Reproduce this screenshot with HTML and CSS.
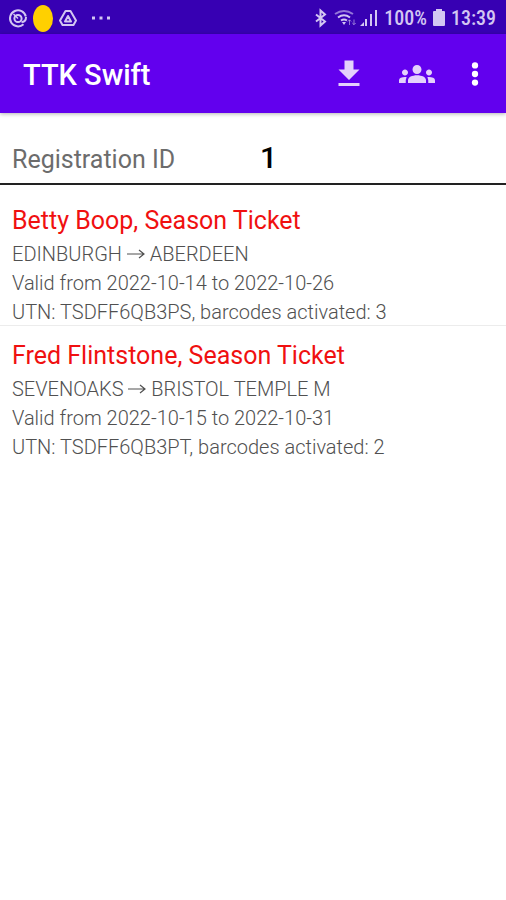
FILE: index.html
```html
<!DOCTYPE html>
<html lang="en">

<head>
    <meta charset="UTF-8">
    <meta name="viewport" content="width=device-width, initial-scale=1.0">
    <title>TTK Swift</title>
    <link rel="stylesheet" href="styles.css">
</head>

<body>
    <div class="status-bar">
        <div class="status-left">
            <svg width="20" height="20" viewBox="0 0 20 20" fill="none" stroke="currentColor" stroke-width="2">
                <path d="M15.500 16.200A8 8 0 1 1 17.800 8.500"/>
                <circle cx="10" cy="10.500" r="3.600"/>
                <path d="M5.500 6l4.500 4.500" stroke-width="1.500"/>
                <path d="M18 9q0 5-4.500 5"/>
            </svg>
            <span class="yellow-dot"></span>
            <svg width="20" height="20" viewBox="0 0 20 20" fill="none" stroke="currentColor" stroke-width="2" stroke-linejoin="round">
                <path d="M7.500 3h5L18 12.500 15.500 17h-11L2 12.500z"/>
                <path d="M10 8l3 5.500H7z"/>
            </svg>
            <svg class="more-dots" width="20" height="20" viewBox="0 0 20 20" fill="currentColor">
                <path d="M1 8.500h3v3H1zM8.500 8.500h3v3h-3zM16 8.500h3v3h-3z"/>
            </svg>
        </div>
        <div class="status-right">
            <svg width="14" height="20" viewBox="0 0 14 20" fill="none" stroke="currentColor" stroke-width="2">
                <path d="M2 6.500l9 7-4.500 4v-15l4.500 4-9 7"/>
            </svg>
            <svg class="wifi" width="24" height="20" viewBox="0 0 24 20" fill="none" stroke="currentColor" stroke-width="2">
                <path d="M1 6q9-6 18 0" opacity=".6"/>
                <path d="M4 9.500q6-4.500 12 0M7 12.500q3-2 6 0"/>
                <path d="M8 14h4l-2 3z" fill="currentColor" stroke="none"/>
                <path d="M15.500 17v-5M13.800 13.500l1.700-1.700 1.700 1.700M20 11.500v5M18.300 15l1.700 1.700 1.700-1.700" stroke-width="1" opacity=".6"/>
            </svg>
            <svg width="18" height="20" viewBox="0 0 18 20" fill="currentColor">
                <path d="M0 18l4-4v4zM5 11h2v7H5zM10 6h2v12h-2zM15 2h2v16h-2z"/>
            </svg>
            <span class="battery-text">100%</span>
            <svg width="12" height="20" viewBox="0 0 12 20" fill="currentColor">
                <path d="M3 1h6v2h2q1 0 1 1v13q0 1-1 1H1q-1 0-1-1V4q0-1 1-1h2z"/>
            </svg>
            <span class="clock">13:39</span>
        </div>
    </div>

    <header class="app-bar">
        <h1>TTK Swift</h1>
        <button type="button" class="btn-icon" aria-label="Download">
            <svg width="36" height="36" viewBox="0 0 24 24" fill="currentColor">
                <path d="M19 9h-4V3H9v6H5l7 7 7-7zM5 18v2h14v-2H5z"/>
            </svg>
        </button>
        <button type="button" class="btn-icon" aria-label="Groups">
            <svg width="36" height="36" viewBox="0 0 24 24" fill="currentColor">
                <path d="M12 12.750c1.630 0 3.070.39 4.240.9 1.080.48 1.760 1.560 1.760 2.730V18H6v-1.610c0-1.180.68-2.260 1.760-2.730 1.170-.52 2.610-.91 4.240-.91zM4 13c1.100 0 2-.9 2-2s-.9-2-2-2-2 .9-2 2 .9 2 2 2zm1.130 1.100c-.37-.06-.74-.1-1.130-.1-.99 0-1.930.21-2.780.58C.48 14.900 0 15.620 0 16.430V18h4.500v-1.610c0-.83.23-1.610.63-2.290zM20 13c1.100 0 2-.9 2-2s-.9-2-2-2-2 .9-2 2 .9 2 2 2zm4 3.430c0-.81-.48-1.530-1.220-1.850-.85-.37-1.790-.58-2.780-.58-.39 0-.76.04-1.130.1.400.68.630 1.460.630 2.290V18H24v-1.570zM12 6c1.660 0 3 1.340 3 3s-1.340 3-3 3-3-1.340-3-3 1.340-3 3-3z"/>
            </svg>
        </button>
        <button type="button" class="btn-icon btn-menu" aria-label="More options">
            <svg width="36" height="36" viewBox="0 0 24 24" fill="currentColor">
                <circle cx="12" cy="6.300" r="2.100"/>
                <circle cx="12" cy="12" r="2.100"/>
                <circle cx="12" cy="17.700" r="2.100"/>
            </svg>
        </button>
    </header>

    <main>
        <form class="registration">
            <label for="registrationId">Registration ID</label>
            <input type="text" id="registrationId" name="registrationId" inputmode="numeric" value="1">
        </form>

        <ul class="tickets">
            <li class="ticket">
                <h2>Betty Boop, Season Ticket</h2>
                <p>EDINBURGH <svg class="arrow" width="18" height="14" viewBox="0 0 18 14" role="img" aria-label="to"><path d="M0 7h17M12 3l5 4-5 4"/></svg> ABERDEEN</p>
                <p>Valid from 2022-10-14 to 2022-10-26</p>
                <p>UTN: TSDFF6QB3PS, barcodes activated: 3</p>
            </li>
            <li class="ticket">
                <h2>Fred Flintstone, Season Ticket</h2>
                <p>SEVENOAKS <svg class="arrow" width="18" height="14" viewBox="0 0 18 14" role="img" aria-label="to"><path d="M0 7h17M12 3l5 4-5 4"/></svg> BRISTOL TEMPLE M</p>
                <p>Valid from 2022-10-15 to 2022-10-31</p>
                <p>UTN: TSDFF6QB3PT, barcodes activated: 2</p>
            </li>
        </ul>
    </main>
</body>

</html>
```
FILE: styles.css
```css
* {
    box-sizing: border-box;
    margin: 0;
    padding: 0;
}

body {
    font-family: Roboto, sans-serif;
    background: #fff;
    color: #505050;
}

svg {
    display: block;
    flex: none;
}

.status-bar {
    height: 34px;
    padding: 0 10px 0 8px;
    display: flex;
    justify-content: space-between;
    align-items: center;
    background: #3700b3;
    color: #d3c6f2;
}

.status-left,
.status-right {
    display: flex;
    align-items: center;
    padding-top: 2px;
}

.status-left {
    gap: 5px;
}

.yellow-dot {
    width: 20px;
    height: 27px;
    border-radius: 50%;
    background: #ffd000;
}

.more-dots {
    margin-left: 8px;
}

.status-right {
    gap: 6px;
    font-family: "Roboto Condensed", Roboto, sans-serif;
    font-size: 20px;
    font-weight: 500;
}

.wifi {
    margin-right: -4px;
}

.app-bar {
    position: relative;
    height: 79px;
    padding: 0 7px 0 23px;
    display: flex;
    align-items: center;
    background: #6200ee;
    color: #fff;
    box-shadow: 0 1px 4px rgba(0, 0, 0, 0.3);
}

.app-bar h1 {
    flex: 1;
    padding-top: 2px;
    font-size: 29px;
    font-weight: 500;
}

.btn-icon {
    width: 68px;
    height: 72px;
    display: flex;
    justify-content: center;
    align-items: center;
    border: none;
    background: none;
    color: #e4d0fc;
    cursor: pointer;
}

.btn-menu {
    width: 48px;
    color: #fff;
}

.registration {
    height: 72px;
    padding: 22px 12px 0;
    display: grid;
    grid-template-columns: 1fr 1fr;
    align-items: center;
    border-bottom: 2px solid #222;
}

.registration label {
    font-size: 25px;
    color: #6c6c6c;
}

.registration input {
    width: 100%;
    padding: 0 0 4px 7px;
    border: none;
    outline: none;
    background: none;
    font-family: inherit;
    font-size: 30px;
    font-weight: 500;
    color: #000;
}

.tickets {
    padding-top: 6px;
    list-style: none;
}

.ticket {
    padding: 13px 12px 0;
    display: flex;
    flex-direction: column;
    gap: 3px;
    border-bottom: 1px solid #ececec;
}

.ticket:last-child {
    border-bottom: none;
}

.ticket h2 {
    font-size: 25px;
    font-weight: 400;
    line-height: 34px;
    color: #f01010;
}

.ticket p {
    font-size: 20px;
    font-weight: 300;
    line-height: 26px;
}

.arrow {
    display: inline-block;
    fill: none;
    stroke: currentColor;
    stroke-width: 1.2;
}
```
